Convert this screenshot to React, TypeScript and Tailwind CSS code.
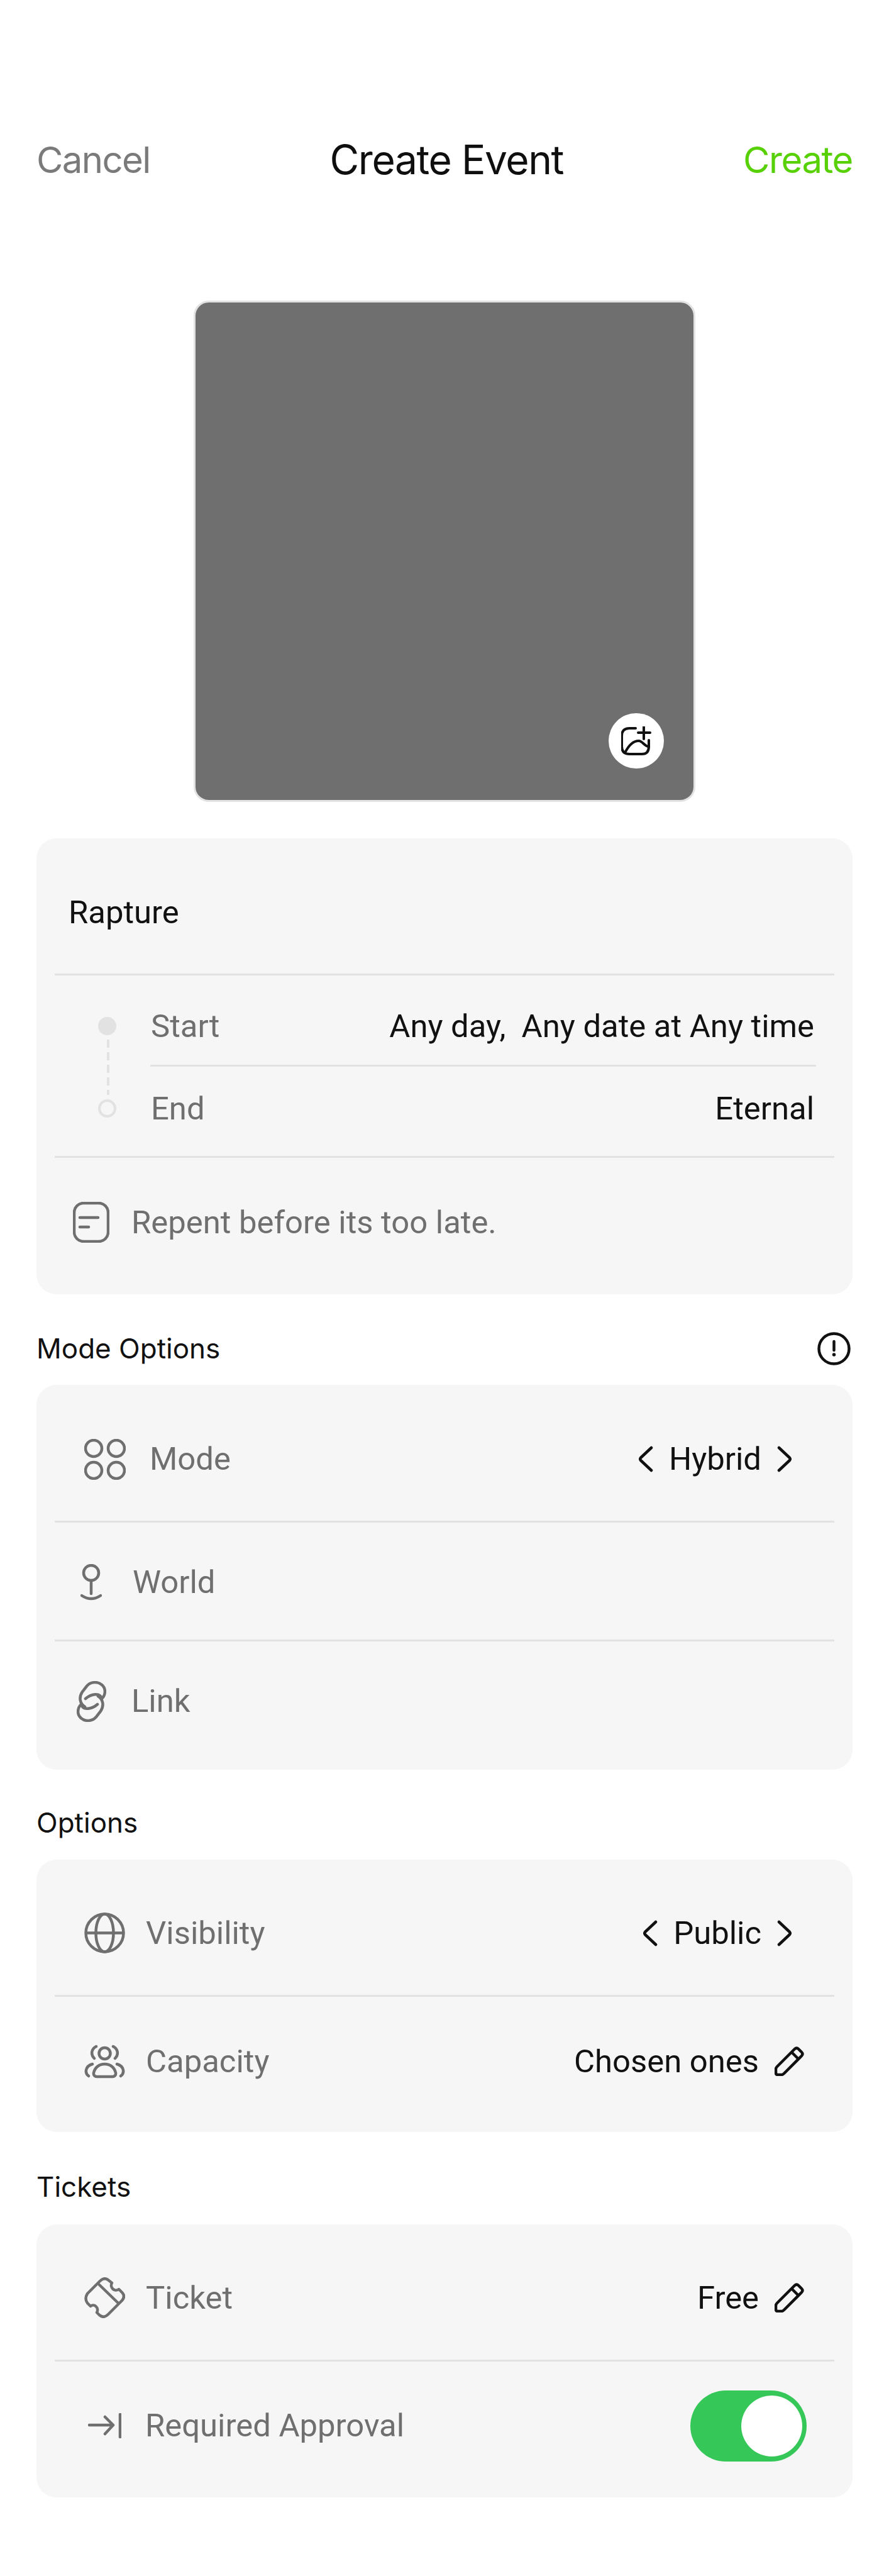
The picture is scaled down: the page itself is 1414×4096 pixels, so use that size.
const grey = '#6f6f6f';
const ink = '#111111';

function Chevron({ dir }: { dir: 'left' | 'right' }) {
  return (
    <svg width="23" height="42" viewBox="0 0 23 42" fill="none" stroke={ink} strokeWidth="4.5" strokeLinecap="round" strokeLinejoin="round">
      {dir === 'left' ? <path d="M20 3 L3 19 Q1.5 21 3 23 L20 39" /> : <path d="M3 3 L20 19 Q21.5 21 20 23 L3 39" />}
    </svg>
  );
}

function Pencil() {
  return (
    <svg width="47" height="47" viewBox="0 0 47 47" fill="none" stroke={ink} strokeWidth="4.5" strokeLinejoin="round">
      <path d="M4 32 L32 4 Q35 1 38 4 L43 9 Q46 12 43 15 L15 43 Q13 45 11 45 L5 45 Q2 45 2 42 L2 36 Q2 34 4 32Z" />
      <path d="M27 9 L38 20" />
    </svg>
  );
}

function DocIcon() {
  return (
    <svg width="58" height="65" viewBox="0 0 58 65" fill="none" stroke={grey} strokeWidth="4.5" strokeLinecap="round">
      <rect x="2" y="2" width="54" height="61" rx="15" />
      <path d="M11 25 H40 M11 40 H25" />
    </svg>
  );
}

function ModeIcon() {
  return (
    <svg width="66" height="65" viewBox="0 0 66 65" fill="none" stroke={grey} strokeWidth="4.5">
      <circle cx="15" cy="15" r="13" />
      <circle cx="51" cy="15" r="13" />
      <circle cx="15" cy="50" r="13" />
      <circle cx="51" cy="50" r="13" />
    </svg>
  );
}

function WorldIcon() {
  return (
    <svg width="34" height="59" viewBox="0 0 34 59" fill="none" stroke={grey} strokeWidth="4.5" strokeLinecap="round">
      <circle cx="17" cy="14" r="12" />
      <path d="M17 26 V47 M2 50 Q17 60 32 50" />
    </svg>
  );
}

function LinkIcon() {
  return (
    <svg width="47" height="65" viewBox="0 0 47 65" fill="none" stroke={grey} strokeWidth="4.5" strokeLinecap="round">
      <path d="M13 41 C5 36 3 26 9 17 L16 8 C22 1 33 0 40 6 C47 12 46 22 40 28 C37 17 22 21 14 28" />
      <path d="M34 24 C42 29 44 39 38 48 L31 57 C25 64 14 65 7 59 C0 53 1 43 7 37 C10 48 25 44 33 37" />
    </svg>
  );
}

function GlobeIcon() {
  return (
    <svg width="65" height="65" viewBox="0 0 65 65" fill="none" stroke={grey} strokeWidth="4.5">
      <circle cx="32.5" cy="32.5" r="30" />
      <ellipse cx="32.5" cy="32.5" rx="14" ry="30" />
      <path d="M2.5 32.5 H62.5" />
    </svg>
  );
}

function CapacityIcon() {
  return (
    <svg width="65" height="54" viewBox="0 0 65 54" fill="none" stroke={grey} strokeWidth="4.5" strokeLinecap="round">
      <circle cx="32.5" cy="14" r="9" />
      <path d="M20 51 H45 A5 5 0 0 0 50 45 C48 36 41 31 32.5 31 C24 31 17 36 15 45 A5 5 0 0 0 20 51Z" />
      <path d="M19 3 C11 7 10 16 16 22 M46 3 C54 7 55 16 49 22" />
      <path d="M7 50 C0 45 2 34 13 31 M58 50 C65 45 63 34 52 31" />
    </svg>
  );
}

function TicketIcon() {
  return (
    <svg width="65" height="65" viewBox="0 0 65 65" fill="none" stroke={grey} strokeWidth="4.5" strokeLinecap="round" strokeLinejoin="round">
      <path d="M5 26 L25 6 Q32 -1 39 5 L44 9 C40 16 48 24 55 19 L60 24 Q66 30 60 37 L38 59 Q31 66 24 60 L20 56 C24 49 16 41 10 46 L5 41 Q0 34 5 26Z" />
      <path d="M24 12 L54 41" />
    </svg>
  );
}

function ArrowIcon() {
  return (
    <svg width="53" height="40" viewBox="0 0 53 40" fill="none" stroke={grey} strokeWidth="4.5" strokeLinecap="round" strokeLinejoin="round">
      <path d="M2 19 H40 M27 6 L40 19 L27 33 M51 2 V38" />
    </svg>
  );
}

function AddImageIcon() {
  return (
    <svg width="48" height="46" viewBox="0 0 48 46" fill="none" stroke={ink} strokeWidth="4" strokeLinecap="round">
      <path d="M23 3 H13 Q1 3 1 15 V32 Q1 44 13 44 H33 Q44 44 44 32 V22" />
      <path d="M6 42 C12 30 20 23 28 23 C34 23 37 32 44 32" />
      <path d="M27 10 H46 M36 1 V20" />
    </svg>
  );
}

function InfoIcon() {
  return (
    <svg width="53" height="53" viewBox="0 0 53 53" fill="none" stroke={ink} strokeWidth="4.5" strokeLinecap="round">
      <circle cx="26.5" cy="26.5" r="24" />
      <path d="M26.5 15 V29" />
      <circle cx="26.5" cy="36" r="1.5" fill={ink} strokeWidth="2.5" />
    </svg>
  );
}

function Divider() {
  return <div className="h-[3px] bg-[#e2e2e2]" />;
}

function Label({ children }: { children: React.ReactNode }) {
  return <span className="block font-['Inter',sans-serif] text-[44px] leading-[60px] text-[#111111]">{children}</span>;
}

function Arrows({ value }: { value: string }) {
  return (
    <div className="flex items-center gap-[25px] text-[#111111]">
      <Chevron dir="left" />
      <span>{value}</span>
      <Chevron dir="right" />
    </div>
  );
}

function Edit({ value }: { value: string }) {
  return (
    <div className="flex items-center gap-[25px] text-[#111111]">
      <span>{value}</span>
      <Pencil />
    </div>
  );
}

type RowProps = {
  icon: React.ReactNode;
  label: string;
  height: string;
  iconClass: string;
  right?: React.ReactNode;
  rightClass?: string;
};

function Row({ icon, label, height, iconClass, right, rightClass }: RowProps) {
  return (
    <div className={`flex items-center justify-between ${height}`}>
      <div className={`flex items-center text-[#6f6f6f] ${iconClass}`}>
        {icon}
        <span>{label}</span>
      </div>
      {right && <div className={rightClass}>{right}</div>}
    </div>
  );
}

export default function App() {
  return (
    <div className="min-h-[4096px] bg-white font-['Roboto',sans-serif] text-[50.8px] leading-[60px]">
      <header className="flex h-[294px] items-end justify-between px-[58px] font-['Inter',sans-serif] leading-[80px]">
        <span className="text-[58px] tracking-[-1.6px] text-[#7a7a7a]">Cancel</span>
        <span className="text-[64px] tracking-[-1.4px] text-[#0f0f0f]">Create Event</span>
        <span className="text-[58px] tracking-[-1.4px] text-[#57d106]">Create</span>
      </header>

      <div className="relative mx-auto mt-[184px] h-[797px] w-[798px] rounded-[24px] border-[3px] border-[#e2e2e2] bg-[#6f6f6f]">
        <div className="absolute right-[47px] bottom-[50px] flex h-[88px] w-[88px] items-center justify-center rounded-full bg-white">
          <AddImageIcon />
        </div>
      </div>

      <section className="mx-[58px] mt-[58px] rounded-[32px] bg-[#f6f6f6] px-[29px]">
        <div className="flex h-[215px] items-center pt-[20px] pl-[22px] text-[#111111]">Rapture</div>
        <Divider />
        <div className="flex h-[287px]">
          <div className="ml-[69px] flex w-[29px] flex-col items-center pt-[66px]">
            <div className="h-[29px] w-[29px] shrink-0 rounded-full bg-[#e2e2e2]" />
            <svg className="my-[7px] ml-[3px] shrink-0" width="4" height="88" viewBox="0 0 4 88">
              <path d="M2 0 V88" stroke="#e2e2e2" strokeWidth="4" strokeDasharray="13 7" />
            </svg>
            <div className="h-[29px] w-[29px] shrink-0 rounded-full border-4 border-[#e2e2e2]" />
          </div>
          <div className="ml-[54px] mr-[29px] flex-1">
            <div className="flex h-[142px] items-center justify-between pt-[19px]">
              <span className="pl-[1px] text-[#6f6f6f]">Start</span>
              <span className="whitespace-pre pr-[3px] text-[#111111]">Any day,  Any date at Any time</span>
            </div>
            <div className="h-[3px] bg-[#e2e2e2]" />
            <div className="flex h-[142px] items-center justify-between pb-[9px]">
              <span className="pl-[1px] text-[#6f6f6f]">End</span>
              <span className="pr-[3px] text-[#111111]">Eternal</span>
            </div>
          </div>
        </div>
        <Divider />
        <Row height="h-[217px] pb-[12px]" iconClass="gap-[35px] pl-[29px]" icon={<DocIcon />} label="Repent before its too late." />
      </section>

      <div className="mx-[58px] mt-[57px] mb-[29px] flex h-[58px] items-center justify-between pr-[3px]">
        <Label>Mode Options</Label>
        <InfoIcon />
      </div>

      <section className="mx-[58px] rounded-[32px] bg-[#f6f6f6] px-[29px]">
        <Row
          height="h-[216px] pt-[20px]"
          iconClass="gap-[38px] pl-[47px]"
          icon={<ModeIcon />}
          label="Mode"
          right={<Arrows value="Hybrid" />}
          rightClass="pr-[68px]"
        />
        <Divider />
        <Row height="h-[186px] pt-[4px]" iconClass="gap-[49px] pl-[41px]" icon={<WorldIcon />} label="World" />
        <Divider />
        <Row height="h-[204px] pb-[14px]" iconClass="gap-[40px] pl-[35px]" icon={<LinkIcon />} label="Link" />
      </section>

      <div className="mx-[58px] mt-[54px] mb-[29px]">
        <Label>Options</Label>
      </div>

      <section className="mx-[58px] rounded-[32px] bg-[#f6f6f6] px-[29px]">
        <Row
          height="h-[215px] pt-[18px]"
          iconClass="gap-[33px] pl-[47px]"
          icon={<GlobeIcon />}
          label="Visibility"
          right={<Arrows value="Public" />}
          rightClass="pr-[68px]"
        />
        <Divider />
        <Row
          height="h-[215px] pb-[10px]"
          iconClass="gap-[33px] pl-[47px]"
          icon={<CapacityIcon />}
          label="Capacity"
          right={<Edit value="Chosen ones" />}
          rightClass="pr-[48px]"
        />
      </section>

      <div className="mx-[58px] mt-[57px] mb-[30px]">
        <Label>Tickets</Label>
      </div>

      <section className="mx-[58px] rounded-[32px] bg-[#f6f6f6] px-[29px]">
        <Row
          height="h-[215px] pt-[18px]"
          iconClass="gap-[33px] pl-[47px]"
          icon={<TicketIcon />}
          label="Ticket"
          right={<Edit value="Free" />}
          rightClass="pr-[48px]"
        />
        <Divider />
        <Row
          height="h-[216px] pb-[12px]"
          iconClass="gap-[38px] pl-[53px]"
          icon={<ArrowIcon />}
          label="Required Approval"
          right={
            <div className="flex h-[113px] w-[185px] items-center justify-end rounded-full bg-[#36c759] pr-[7px]">
              <div className="h-[97px] w-[97px] rounded-full bg-white" />
            </div>
          }
          rightClass="pr-[44px]"
        />
      </section>
    </div>
  );
}
